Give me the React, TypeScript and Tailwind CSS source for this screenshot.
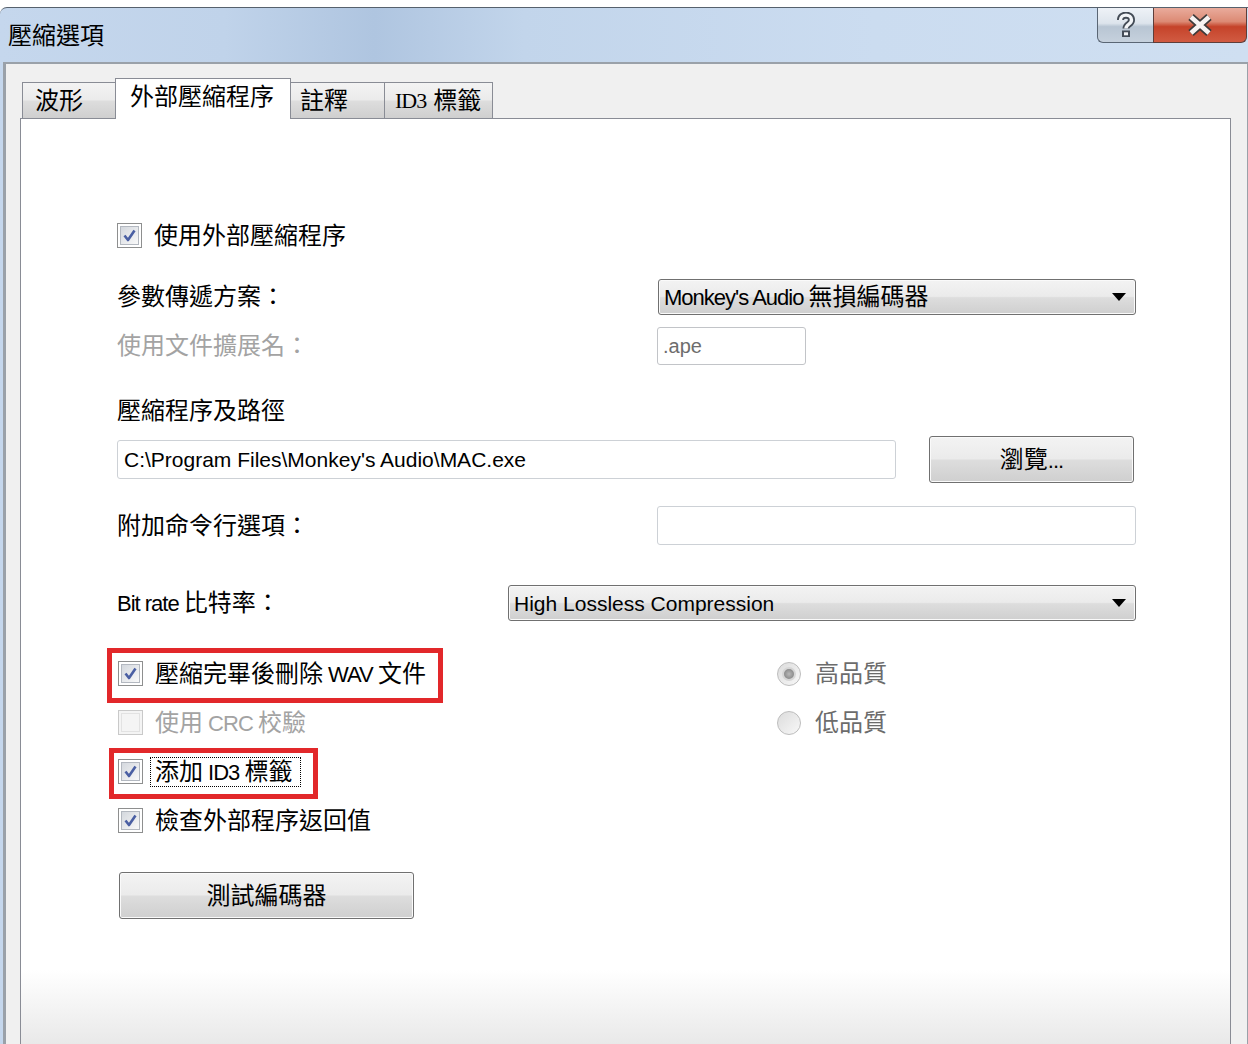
import React from 'react'

const CJK = /([\u2e80-\u9fff\uf900-\ufaff\uff00-\uffef\u3000-\u303f]+)/

// splits mixed text so CJK runs and latin runs get their own sizes
function T({ s, latin = 'text-[22px] tracking-[-1px]' }: { s: string; latin?: string }) {
  return (
    <span className="whitespace-pre">
      {s
        .split(CJK)
        .filter(Boolean)
        .map((p, i) =>
          CJK.test(p) ? (
            <span key={i} className="text-[24px]">{p}</span>
          ) : (
            <span key={i} className={latin}>{p}</span>
          )
        )}
    </span>
  )
}

const btnBg =
  'bg-[linear-gradient(to_bottom,#f3f3f3_0%,#ebebeb_48%,#dddddd_52%,#cfcfcf_100%)]'

function CheckBox({ checked, disabled }: { checked?: boolean; disabled?: boolean }) {
  return (
    <span
      className={`flex h-[25px] w-[25px] shrink-0 items-center justify-center border ${
        disabled ? 'border-[#c9c9c9] bg-[#f4f4f4]' : 'border-[#8e8f8f] bg-white'
      }`}
    >
      <span
        className={`flex h-[19px] w-[19px] items-center justify-center border ${
          disabled
            ? 'border-[#e2e2e2] bg-[#f4f4f4]'
            : 'border-[#b3b8c0] bg-linear-to-br from-[#d4d8de] to-[#f9f9f9]'
        }`}
      >
        {checked && (
          <svg width="17" height="17" viewBox="0 0 17 17">
            <path d="M3.5 8.5 L7 13 L13.5 3.5" fill="none" stroke="#4a5fa3" strokeWidth="2.6" strokeLinejoin="round" />
          </svg>
        )}
      </span>
    </span>
  )
}

function Radio({ checked }: { checked?: boolean }) {
  return (
    <span className="flex h-[24px] w-[24px] shrink-0 items-center justify-center rounded-full border border-[#bdbdbd] bg-linear-to-br from-[#dcdcdc] to-[#f8f8f8]">
      {checked && (
        <span className="h-[14px] w-[14px] rounded-full border-2 border-[#d6d6d6] bg-radial from-[#b8b8b8] to-[#7a7a7a]" />
      )}
    </span>
  )
}

function Combo({ text, className, latin }: { text: string; className: string; latin?: string }) {
  return (
    <div
      className={`flex h-[36px] items-center justify-between rounded-[3px] border border-[#707070] pl-[5px] pr-[9px] shadow-[inset_0_0_0_1px_#fafafa] ${btnBg} ${className}`}
    >
      <span className="leading-none">
        <T s={text} latin={latin} />
      </span>
      <svg width="14" height="8" viewBox="0 0 14 8">
        <path d="M0 0 H14 L7 8 Z" fill="#000" />
      </svg>
    </div>
  )
}

function Row({ children, className = '' }: { children: React.ReactNode; className?: string }) {
  return <div className={`flex items-center ${className}`}>{children}</div>
}

export default function App() {
  return (
    <div className="h-[1044px] w-[1248px] overflow-hidden bg-white pt-[7px] font-['Liberation_Sans','Noto_Sans_CJK_TC',sans-serif] text-black">
      <div className="flex h-[1037px] flex-col rounded-tl-[7px] border-t border-[#56616d] bg-[linear-gradient(90deg,#c5d7ed_0%,#c0d3ea_18%,#afc5e0_30%,#c2d5eb_42%,#cbdcf0_70%,#cfdff1_100%)]">
        {/* title bar */}
        <div className="flex h-[54px] shrink-0 items-start justify-between">
          <div className="ml-[8px] self-center pt-[2px] text-[24px] leading-none">壓縮選項</div>
          <div className="mr-px flex">
            <div className="flex h-[35px] w-[56px] items-center justify-center rounded-bl-[6px] border border-t-0 border-r-0 border-[#5a6674] bg-[linear-gradient(to_bottom,#eef2f7_0%,#dde4ec_45%,#b8c5d3_55%,#c6d1dd_100%)]">
              <svg width="20" height="26" viewBox="0 0 20 26">
                <path d="M4.5 8 C4.5 1.5 15.5 1.5 15.5 8 C15.5 12.5 10 12 10 16.5" fill="none" stroke="#434b56" strokeWidth="7" />
                <rect x="6" y="18.5" width="8" height="6.5" fill="#434b56" />
                <path d="M4.5 8 C4.5 1.5 15.5 1.5 15.5 8 C15.5 12.5 10 12 10 16.5" fill="none" stroke="#f2f4f7" strokeWidth="3.4" />
                <rect x="8" y="20.3" width="4" height="3" fill="#f2f4f7" />
              </svg>
            </div>
            <div className="flex h-[35px] w-[94px] items-center justify-center rounded-br-[6px] border border-t-0 border-[#5e3e3a] bg-[linear-gradient(to_bottom,#e9ab9c_0%,#dc8a74_40%,#c5432a_55%,#d15b42_100%)]">
              <svg width="32" height="24" viewBox="0 0 32 24">
                <path d="M7 4 L25 20 M25 4 L7 20" stroke="#3d3a3a" strokeWidth="8" />
                <path d="M7 4 L25 20 M25 4 L7 20" stroke="#f7f2f1" strokeWidth="4.5" />
              </svg>
            </div>
          </div>
        </div>

        {/* client area */}
        <div className="ml-[3px] flex flex-1 flex-col border-t-2 border-l-[3px] border-r border-[#9aa1a9] bg-[#f0f0f0] pl-[14px] pr-[16px] pt-[14px]">
          {/* tabs */}
          <div className="flex items-end pl-[2px]">
            <div className={`flex h-[36px] w-[93px] items-center border-t border-l border-[#898c95] pl-[12px] leading-none ${btnBg}`}>
              <span className="text-[24px]">波形</span>
            </div>
            <div className="relative z-10 -mb-px flex h-[41px] w-[176px] items-center border border-b-0 border-[#898c95] bg-white pb-[4px] pl-[14px] leading-none">
              <span className="text-[24px]">外部壓縮程序</span>
            </div>
            <div className={`flex h-[36px] w-[93px] items-center border-t border-[#898c95] pl-[9px] leading-none ${btnBg}`}>
              <span className="text-[24px]">註釋</span>
            </div>
            <div className={`flex h-[36px] w-[109px] items-center border-t border-l border-r border-[#898c95] pl-[10px] leading-none ${btnBg}`}>
              <span className="font-['Liberation_Serif',serif] text-[22px] tracking-[-1px]">ID3</span>
              <span className="ml-[7px] text-[24px]">標籤</span>
            </div>
          </div>

          {/* tab panel */}
          <div className="flex flex-1 flex-col border border-b-0 border-[#898c95] bg-linear-to-b from-white from-[92%] to-[#e9e9e9] pl-[96px] pr-[94px] pt-[104px] leading-none">
            <Row className="h-[25px]">
              <CheckBox checked />
              <span className="ml-[12px]"><T s="使用外部壓縮程序" /></span>
            </Row>

            <Row className="mt-[31px] h-[36px]">
              <span className="w-[541px] shrink-0"><T s="參數傳遞方案：" /></span>
              <Combo text="Monkey's Audio 無損編碼器" className="w-[478px]" />
            </Row>

            <Row className="mt-[12px] h-[38px]">
              <span className="w-[540px] shrink-0 text-[#a3a3a3]"><T s="使用文件擴展名：" /></span>
              <div className="flex h-[38px] w-[149px] items-center rounded-[3px] border border-[#c2c4c8] bg-white pl-[5px] text-[20px] text-[#6d6d6d]">
                .ape
              </div>
            </Row>

            <Row className="mt-[32px] h-[28px]">
              <T s="壓縮程序及路徑" />
            </Row>

            <Row className="mt-[11px] h-[47px] justify-between">
              <div className="flex h-[39px] w-[779px] items-center rounded-[3px] border border-[#cdd1d6] bg-white pl-[6px] text-[21px]">
                C:\Program Files\Monkey's Audio\MAC.exe
              </div>
              <div className={`mr-[2px] flex h-[47px] w-[205px] items-center justify-center rounded-[3px] border border-[#707070] shadow-[inset_0_0_0_1px_#fafafa] ${btnBg}`}>
                <T s="瀏覽..." />
              </div>
            </Row>

            <Row className="mt-[23px] h-[39px]">
              <span className="w-[540px] shrink-0"><T s="附加命令行選項：" /></span>
              <div className="h-[39px] w-[479px] rounded-[3px] border border-[#cdd1d6] bg-white" />
            </Row>

            <Row className="mt-[40px] h-[36px]">
              <span className="w-[391px] shrink-0"><T s="Bit rate 比特率：" /></span>
              <Combo text="High Lossless Compression" className="w-[628px]" latin="text-[21px]" />
            </Row>

            <div className="mt-[28px] flex">
              <div className="w-[660px] shrink-0">
                <Row className="relative h-[49px]">
                  <div className="pointer-events-none absolute -left-[10px] -top-px h-[55px] w-[336px] border-[5px] border-[#e2282a]" />
                  <span className="ml-px"><CheckBox checked /></span>
                  <span className="ml-[12px]"><T s="壓縮完畢後刪除 WAV 文件" /></span>
                </Row>
                <Row className="h-[49px]">
                  <span className="ml-px"><CheckBox disabled /></span>
                  <span className="ml-[12px] text-[#a3a3a3]"><T s="使用 CRC 校驗" /></span>
                </Row>
                <Row className="relative h-[49px]">
                  <div className="pointer-events-none absolute -left-[8px] top-px h-[51px] w-[209px] border-[5px] border-[#e2282a]" />
                  <span className="ml-px"><CheckBox checked /></span>
                  <span className="ml-[7px] flex h-[30px] items-center border border-dotted border-black pl-[4px] pr-[8px]">
                    <T s="添加 ID3 標籤" />
                  </span>
                </Row>
                <Row className="h-[49px]">
                  <span className="ml-px"><CheckBox checked /></span>
                  <span className="ml-[12px]"><T s="檢查外部程序返回值" /></span>
                </Row>
              </div>
              <div>
                <Row className="h-[49px]">
                  <Radio checked />
                  <span className="ml-[14px] text-[#6c6c6c]"><T s="高品質" /></span>
                </Row>
                <Row className="h-[49px]">
                  <Radio />
                  <span className="ml-[14px] text-[#6c6c6c]"><T s="低品質" /></span>
                </Row>
              </div>
            </div>

            <div className={`ml-[2px] mt-[27px] flex h-[47px] w-[295px] items-center justify-center rounded-[3px] border border-[#707070] shadow-[inset_0_0_0_1px_#fafafa] ${btnBg}`}>
              <T s="測試編碼器" />
            </div>
          </div>
        </div>
      </div>
    </div>
  )
}
